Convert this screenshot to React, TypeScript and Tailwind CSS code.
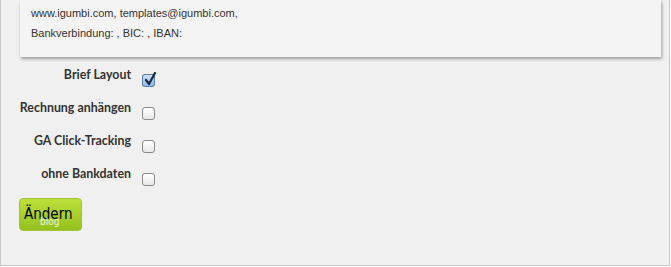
export default function App() {
  const rows = [
    { label: 'Brief Layout', checked: true },
    { label: 'Rechnung anhängen', checked: false },
    { label: 'GA Click-Tracking', checked: false },
    { label: 'ohne Bankdaten', checked: false },
  ];
  return (
    <div className="h-[267px] w-[671px] bg-white">
      <div className="h-[266px] w-[670px] border-l border-r border-b border-[#c8c8c8] bg-[#f0f0f0]">
        {/* address box */}
        <div className="ml-[19px] mr-[8px] h-[57px] bg-[#f4f4f4] pl-[11px] pt-[3px] shadow-[1px_2px_3px_rgba(0,0,0,0.35)] text-[11px] leading-[20px] text-[#333] font-['Liberation_Sans',sans-serif]">
          <div>www.igumbi.com, templates@igumbi.com,</div>
          <div>Bankverbindung: , BIC: , IBAN:</div>
        </div>

        {/* options */}
        <div className="mt-[13px] flex flex-col gap-[17px]">
          {rows.map(r => (
            <div key={r.label} className="flex items-center h-[16px]">
              <div className="w-[130px] text-right text-[12.4px] font-bold text-[#333] font-['Lato',sans-serif] -mt-[6px] whitespace-nowrap">{r.label}</div>
              <div className="ml-[11px] mt-[4px] h-[13px] w-[13px] rounded-[3px] border border-[#8a8a8a] bg-gradient-to-b from-white to-[#e8e8e8] flex items-center justify-center relative">
                {r.checked && (
                  <>
                    <div className="absolute inset-0 rounded-[3px] bg-gradient-to-b from-[#cfe2f7] to-[#8fb8e8] border border-[#5a7fae] -m-px" />
                    <svg className="absolute -top-[3px] left-[1px]" width="13" height="14" viewBox="0 0 13 14">
                      <path d="M2 8 L5 12 L11 1" fill="none" stroke="#1a2a44" strokeWidth="2.2" strokeLinecap="round" strokeLinejoin="round" />
                    </svg>
                  </>
                )}
              </div>
            </div>
          ))}
        </div>

        {/* button */}
        <div className="ml-[18px] mt-[13px] relative h-[33px] w-[63px] rounded-[4px] border border-[#a2c23a] bg-gradient-to-b from-[#bde03a] to-[#94c11f] font-['DejaVu_Sans_Condensed','DejaVu_Sans',sans-serif]">
          <div className="absolute left-[4px] top-[6px] text-[15px] leading-[18px] text-black">Ändern</div>
          <div className="absolute left-[20px] top-[17px] text-[10px] leading-[12px] text-white/80">blog</div>
        </div>
      </div>
    </div>
  );
}
